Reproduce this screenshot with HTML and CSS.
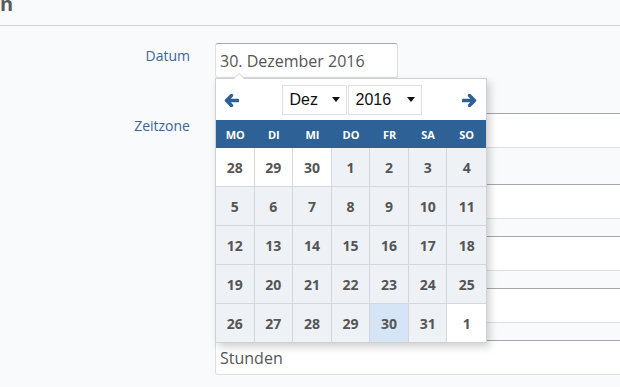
FILE: index.html
```html
<!DOCTYPE html>
<html lang="de">
<head>
    <meta charset="UTF-8">
    <meta name="viewport" content="width=device-width, initial-scale=1.0">
    <title>Termin</title>
    <link rel="stylesheet" href="styles.css">
</head>
<body>
    <header class="page-header">
        <h1>n</h1>
    </header>

    <form class="form">
        <div class="form-row">
            <label class="form-label">Datum</label>
            <div class="form-field">
                <input class="input input-date" type="text" value="30. Dezember 2016">

                <!-- Datepicker popup -->
                <div class="datepicker">
                    <div class="dp-nav">
                        <span class="dp-arrow">
                            <svg width="15" height="13" viewBox="0 0 15 13"><path d="M14 6.5H3M7.5 1.5L2.5 6.5l5 5" fill="none" stroke="currentColor" stroke-width="3.4" stroke-linecap="round" stroke-linejoin="round"/></svg>
                        </span>
                        <div class="dp-selects">
                            <span class="dp-select month">Dez<i class="caret"></i></span>
                            <span class="dp-select year">2016<i class="caret"></i></span>
                        </div>
                        <span class="dp-arrow">
                            <svg width="15" height="13" viewBox="0 0 15 13"><path d="M1 6.5h11M7.5 1.5l5 5-5 5" fill="none" stroke="currentColor" stroke-width="3.4" stroke-linecap="round" stroke-linejoin="round"/></svg>
                        </span>
                    </div>
                    <div class="dp-weekdays">
                        <span>MO</span><span>DI</span><span>MI</span><span>DO</span><span>FR</span><span>SA</span><span>SO</span>
                    </div>
                    <div class="dp-days">
                        <span class="day other">28</span><span class="day other">29</span><span class="day other">30</span><span class="day">1</span><span class="day">2</span><span class="day">3</span><span class="day">4</span>
                        <span class="day">5</span><span class="day">6</span><span class="day">7</span><span class="day">8</span><span class="day">9</span><span class="day">10</span><span class="day">11</span>
                        <span class="day">12</span><span class="day">13</span><span class="day">14</span><span class="day">15</span><span class="day">16</span><span class="day">17</span><span class="day">18</span>
                        <span class="day">19</span><span class="day">20</span><span class="day">21</span><span class="day">22</span><span class="day">23</span><span class="day">24</span><span class="day">25</span>
                        <span class="day">26</span><span class="day">27</span><span class="day">28</span><span class="day">29</span><span class="day selected">30</span><span class="day">31</span><span class="day other">1</span>
                    </div>
                </div>
            </div>
        </div>

        <div class="form-row">
            <label class="form-label">Zeitzone</label>
            <div class="form-field field-stack">
                <input class="input input-wide first" type="text">
                <input class="input input-wide" type="text">
                <input class="input input-wide" type="text">
                <input class="input input-wide" type="text">
                <input class="input input-wide" type="text" placeholder="Stunden">
            </div>
        </div>
    </form>
</body>
</html>
```

FILE: styles.css
```css
:root {
    --page-bg: #f9fafc;
    --label-color: #3b6694;
    --text-color: #555;
    --blue: #2e6296;
    --border-light: #dcdfe3;
    --border-dark: #a3a6aa;
}

body {
    font-family: 'Open Sans', sans-serif;
    margin: 0;
    padding: 0;
    background-color: var(--page-bg);
    color: var(--text-color);
    overflow: hidden;
}

.page-header {
    display: flow-root;
    height: 25px;
    border-bottom: 1px solid #cfd2d6;
}

h1 {
    font-size: 20px;
    font-weight: 700;
    line-height: 20px;
    margin: -6px 0 0 0;
    color: #5a5a5a;
}

.form {
    padding-top: 17px;
}

.form-row {
    display: flex;
    gap: 25px;
    margin-bottom: 35px;
}

.form-row:last-child {
    margin-bottom: 0;
}

.form-label {
    width: 190px;
    flex-shrink: 0;
    padding-top: 3px;
    text-align: right;
    font-size: 14px;
    line-height: 20px;
    color: var(--label-color);
}

.form-field {
    position: relative;
}

.field-stack {
    display: flex;
    flex-direction: column;
    gap: 17px;
}

.input {
    box-sizing: border-box;
    height: 35px;
    padding: 0 4px;
    border: 1px solid var(--border-light);
    border-top-color: var(--border-dark);
    border-radius: 3px;
    background-color: #fff;
    font-family: 'Open Sans', sans-serif;
    font-size: 16px;
    color: var(--text-color);
    outline: none;
}

.input::placeholder {
    color: var(--text-color);
}

.input-date {
    width: 183px;
}

.input-wide {
    width: 430px;
}

.input-wide.first {
    margin-bottom: 19px;
}

/* Datepicker */
.datepicker {
    position: absolute;
    top: 35px;
    left: 0;
    width: 272px;
    box-sizing: border-box;
    background-color: #fff;
    border: 1px solid #cdd0d4;
    box-shadow: 3px 4px 8px rgba(0, 0, 0, 0.18);
    z-index: 10;
}

.datepicker::before,
.datepicker::after {
    content: "";
    position: absolute;
    left: 17px;
    border: 6px solid transparent;
    border-top: 0;
}

.datepicker::before {
    top: -6px;
    border-bottom-color: #cdd0d4;
}

.datepicker::after {
    top: -5px;
    border-bottom-color: #fff;
}

.dp-nav {
    display: flex;
    justify-content: space-between;
    align-items: center;
    height: 41px;
    padding: 0 9px 0 8px;
}

.dp-arrow {
    display: flex;
    color: var(--blue);
    margin-top: 1px;
}

.dp-selects {
    display: flex;
    gap: 1px;
    margin-left: 2px;
}

.dp-select {
    box-sizing: border-box;
    display: flex;
    align-items: center;
    justify-content: space-between;
    height: 30px;
    padding: 0 6px 0 7px;
    border: 1px solid #dfe1e4;
    background-color: #fff;
    font-family: 'Liberation Sans', Arial, sans-serif;
    font-size: 16px;
    color: #111;
}

.dp-select.month {
    width: 65px;
}

.dp-select.year {
    width: 74px;
}

.caret {
    width: 0;
    height: 0;
    border-left: 4px solid transparent;
    border-right: 4px solid transparent;
    border-top: 5px solid #111;
}

.dp-weekdays {
    display: grid;
    grid-template-columns: repeat(7, 1fr);
    height: 28px;
    align-items: center;
    background-color: var(--blue);
    color: #fff;
    font-size: 11px;
    font-weight: 700;
    text-align: center;
}

.dp-days {
    display: grid;
    grid-template-columns: repeat(7, 1fr);
}

.day {
    height: 38px;
    display: flex;
    align-items: center;
    justify-content: center;
    border-right: 1px solid #d3d6da;
    border-bottom: 1px solid #d3d6da;
    background-color: #eef1f6;
    font-size: 14px;
    font-weight: 700;
    color: var(--text-color);
}

.day:nth-child(7n) {
    border-right: none;
}

.day:nth-last-child(-n+7) {
    border-bottom: none;
}

.day.other {
    background-color: #fff;
}

.day.selected {
    background-color: #d5e5f5;
}
```
